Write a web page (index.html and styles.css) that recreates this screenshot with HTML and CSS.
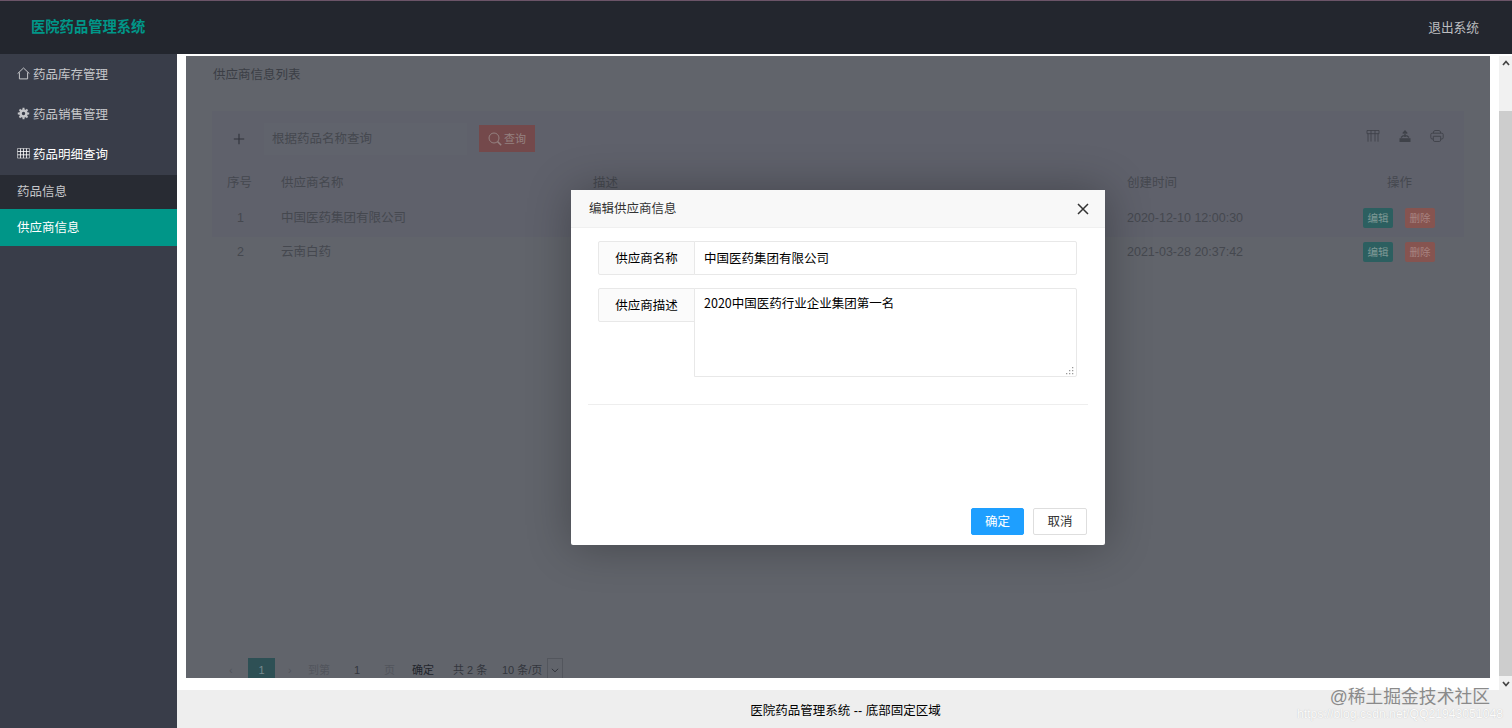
FILE: index.html
```
<!DOCTYPE html>
<html lang="zh-CN">
<head>
  <meta charset="UTF-8">
  <meta name="viewport" content="width=device-width, initial-scale=1.0">
  <title>医院药品管理系统</title>
  <link rel="stylesheet" href="styles.css">
</head>
<body>
  <div class="layout">
    <header class="header">
      <div class="logo">医院药品管理系统</div>
      <a class="logout">退出系统</a>
    </header>

    <nav class="side">
      <a class="nav-item">
        <svg class="nav-icon" viewBox="0 0 13 13"><path d="M.6 6.6 6.5 1l5.9 5.6M2.4 5.4v6.5h8.2V5.4" fill="none" stroke="currentColor" stroke-width="1"/></svg>
        药品库存管理
      </a>
      <a class="nav-item">
        <svg class="nav-icon" viewBox="0 0 13 13"><circle cx="6.5" cy="6.5" r="3" fill="none" stroke="currentColor" stroke-width="2.6"/><path d="M6.5 .8v2M6.5 10.2v2M.8 6.5h2M10.2 6.5h2M2.5 2.5l1.4 1.4M9.1 9.1l1.4 1.4M2.5 10.5l1.4-1.4M9.1 3.9l1.4-1.4" stroke="currentColor" stroke-width="2"/></svg>
        药品销售管理
      </a>
      <a class="nav-item nav-open">
        <svg class="nav-icon" viewBox="0 0 13 13"><path d="M.5 1.5h12v9.6H.5z" fill="none" stroke="currentColor" stroke-width=".5"/><path d="M3.5 1.5v9.6M6.5 1.5v9.6M9.5 1.5v9.6M.5 4.5h12M.5 7.8h12" fill="none" stroke="currentColor" stroke-width=".8"/></svg>
        药品明细查询
      </a>
      <div class="nav-child">
        <a class="child-item">药品信息</a>
        <a class="child-item active">供应商信息</a>
      </div>
    </nav>

    <main class="body">
      <section class="frame">
        <h2 class="frame-title">供应商信息列表</h2>
        <div class="panel">
          <div class="toolbar">
            <span class="add"><svg viewBox="0 0 12 12"><path d="M6 .8v10.4M.8 6h10.4" stroke="currentColor" stroke-width="1.1"/></svg></span>
            <span class="search">根据药品名称查询</span>
            <span class="query">
              <svg viewBox="0 0 14 14"><circle cx="6" cy="6" r="5" fill="none" stroke="currentColor"/><path d="m9.6 9.6 3.6 3.6" stroke="currentColor" stroke-width="1.5"/></svg>
              查询
            </span>
            <div class="tools">
              <svg viewBox="0 0 14 14"><path d="M1 1.5h12v3.2H1zM5 1.5v11M9 1.5v11M2 4.7v8M12 4.7v8" fill="none" stroke="currentColor" stroke-width=".9"/></svg>
              <svg viewBox="0 0 14 14"><path d="M1.5 9.2h11V13h-11z" fill="currentColor"/><path d="M3 8.5 5 6.8h4l2 1.7M7 8V2.5M4.8 4.5 7 2l2.2 2.5" fill="none" stroke="currentColor" stroke-width="1.3"/></svg>
              <svg viewBox="0 0 14 14"><path d="M3.3 4.2Q3.3 1.5 5 1.5h4q1.7 0 1.7 2.7M3.3 10H2.2Q.8 10 .8 8.5v-3Q.8 4.2 2.2 4.2h9.6q1.4 0 1.4 1.3v3q0 1.5-1.4 1.5h-1.1M3.3 7.3h7.4v3.7q0 1.5-1.5 1.5H4.800q-1.500 0-1.500-1.500z" fill="none" stroke="currentColor" stroke-width=".9"/></svg>
            </div>
          </div>
          <div class="row head">
            <span class="no">序号</span><span>供应商名称</span><span>描述</span><span>创建时间</span><span class="ops">操作</span>
          </div>
          <div class="row">
            <span class="no">1</span><span>中国医药集团有限公司</span><span></span><span>2020-12-10 12:00:30</span>
            <span class="ops"><b class="tag edit">编辑</b><b class="tag del">删除</b></span>
          </div>
        </div>
        <div class="row last">
          <span class="no">2</span><span>云南白药</span><span></span><span>2021-03-28 20:37:42</span>
          <span class="ops"><b class="tag edit">编辑</b><b class="tag del">删除</b></span>
        </div>
        <div class="pager">
          <span class="faint prev">‹</span>
          <span class="page">1</span>
          <span class="faint next">›</span>
          <span class="faint goto">到第</span>
          <span class="num">1</span>
          <span class="faint unit">页</span>
          <span class="ok">确定</span>
          <span class="total">共 2 条</span>
          <span class="limit">10 条/页</span>
          <span class="arrow"><svg viewBox="0 0 8 5"><path d="m.8.8 3.200 3L7.200.8" fill="none" stroke="currentColor"/></svg></span>
        </div>
      </section>
      <div class="scrollbar">
        <svg viewBox="0 0 8 6"><path d="m1 5 3-3.500L7 5" fill="none" stroke="currentColor" stroke-width="1.700"/></svg>
        <div class="thumb"></div>
        <svg viewBox="0 0 8 6"><path d="m1 1 3 3.500L7 1" fill="none" stroke="currentColor" stroke-width="1.700"/></svg>
      </div>
    </main>

    <footer class="footer">医院药品管理系统 -- 底部固定区域</footer>
  </div>

  <div class="dialog">
    <div class="dialog-title">
      <span>编辑供应商信息</span>
      <svg class="close" viewBox="0 0 12 12"><path d="m1 1 10 10M11 1 1 11" stroke="currentColor" stroke-width="1.500"/></svg>
    </div>
    <form class="dialog-form">
      <div class="field">
        <label class="label">供应商名称</label>
        <div class="control">中国医药集团有限公司</div>
      </div>
      <div class="field">
        <label class="label">供应商描述</label>
        <div class="control area">2020中国医药行业企业集团第一名
          <svg class="grip" viewBox="0 0 8 8"><path d="M6 0h1.300v1.300H6zM3 3h1.300v1.300H3zM6 3h1.300v1.300H6zM0 6h1.300v1.300H0zM3 6h1.300v1.300H3zM6 6h1.300v1.300H6z" fill="#999"/></svg>
        </div>
      </div>
    </form>
    <hr class="line">
    <div class="dialog-btns">
      <a class="btn primary">确定</a>
      <a class="btn">取消</a>
    </div>
  </div>

  <div class="mark">@稀土掘金技术社区</div>
  <div class="mark-url">https://blog.csdn.net/QQ21943051048</div>
</body>
</html>
```
FILE: styles.css
```
* {
  box-sizing: border-box;
}
body {
  margin: 0;
  height: 728px;
  overflow: hidden;
  position: relative;
  font-family: "Liberation Sans", "Noto Sans CJK SC", sans-serif;
  font-size: 12.5px;
  line-height: 18px;
  color: #000;
  background: #fff;
  white-space: nowrap;
}
svg {
  display: block;
  flex: none;
}
.layout {
  display: grid;
  grid-template: 54px 636px 38px / 177px 1fr;
  height: 728px;
}
.header {
  grid-column: 1 / 3;
  display: flex;
  justify-content: space-between;
  align-items: center;
  padding: 0 33px 1px 31px;
  background: #23262e;
  border-top: 1px solid #6b5468;
}
.logo {
  color: #009688;
  font-size: 14.3px;
  font-weight: bold;
}
.logout {
  padding-top: 1px;
  color: #bdbec0;
  font-size: 12.7px;
}

/* side menu */
.side {
  grid-row: 2 / 4;
  background: #393d49;
  color: #c6c7ca;
}
.nav-item {
  display: flex;
  align-items: center;
  gap: 3px;
  height: 40px;
  padding-top: 1px;
  padding-left: 17px;
}
.nav-icon {
  width: 13px;
  height: 13px;
  margin-top: -2px;
}
.nav-open {
  color: #fff;
}
.nav-child {
  margin-top: 1px;
  background: #282b33;
}
.child-item {
  display: block;
  height: 34px;
  padding-left: 17px;
  line-height: 35px;
}
.active {
  height: 37px;
  line-height: 38px;
  color: #fff;
  background: #009688;
}

/* list page, dimmed by the dialog shade */
.body {
  display: flex;
  justify-content: space-between;
  padding: 2px 0 0 9px;
}
.frame {
  width: 1304px;
  height: 622px;
  display: flex;
  flex-direction: column;
  overflow: hidden;
  background: #61646b;
  color: #45484f;
}
.frame-title {
  margin: 10px 0 0 27px;
  font-size: 12.5px;
  line-height: 18px;
  font-weight: normal;
  color: #3b3e45;
}
.panel {
  margin: 27px 26px 0;
  height: 126px;
  background: #5f616b;
}
.toolbar {
  display: flex;
  align-items: center;
  height: 55px;
  padding-left: 13px;
}
.add {
  width: 28px;
  height: 28px;
  padding: 8px;
  color: #30333b;
}
.add svg {
  width: 12px;
  height: 12px;
}
.search {
  width: 203px;
  height: 32px;
  margin-left: 11px;
  padding-left: 8px;
  line-height: 33px;
  background: #60636c;
}
.query {
  display: flex;
  align-items: center;
  gap: 2px;
  width: 56px;
  height: 27px;
  margin-left: 12px;
  padding-left: 9px;
  font-size: 11px;
  color: #948180;
  background: #74494b;
}
.query svg {
  width: 14px;
  height: 14px;
}
.tools {
  display: flex;
  gap: 18px;
  margin: -5px 20px 0 auto;
  color: #3f4249;
}
.tools svg {
  width: 14px;
  height: 14px;
}
.row {
  display: grid;
  grid-template-columns: 56px 312px 534px 236px 1fr;
  align-items: center;
  height: 35px;
  padding-left: 13px;
}
.head {
  height: 34px;
}
.no {
  padding-left: 12px;
}
.head .no {
  padding-left: 2px;
}
.last {
  margin: 0 26px;
  height: 30px;
}
.ops {
  display: flex;
  gap: 12px;
}
.head .ops {
  padding-left: 24px;
}
.tag {
  width: 30px;
  height: 20px;
  border-radius: 2px;
  font-size: 10.5px;
  font-weight: normal;
  line-height: 20px;
  text-align: center;
}
.edit {
  background: #2c5f60;
  color: #7e9895;
}
.del {
  background: #865450;
  color: #a88380;
}
.pager {
  display: flex;
  align-items: flex-start;
  height: 20px;
  margin: auto 0 0 43px;
  font-size: 11px;
  line-height: 24px;
  color: #33363d;
}
.faint {
  color: #51545c;
}
.prev {
  width: 19px;
}
.page {
  width: 27px;
  height: 20px;
  text-align: center;
  background: #2e5055;
  color: #778a8f;
}
.next {
  width: 33px;
  padding-left: 13px;
}
.goto {
  width: 46px;
}
.num {
  width: 30px;
}
.unit {
  width: 28px;
}
.ok {
  width: 41px;
  color: #22252b;
}
.total {
  width: 49px;
}
.limit {
  width: 45px;
}
.arrow {
  width: 16px;
  height: 20px;
  padding: 9px 3px 0;
  border: 1px solid #53565d;
  border-bottom: 0;
}
.arrow svg {
  width: 8px;
  height: 5px;
}
.scrollbar {
  display: flex;
  flex-direction: column;
  align-items: center;
  justify-content: space-between;
  width: 13px;
  padding: 4px 0 3px;
  background: #f1f1f1;
  color: #444;
}
.scrollbar svg {
  width: 8px;
  height: 6px;
}
.thumb {
  width: 13px;
  height: 565px;
  margin-top: 40px;
  background: #cdcdcd;
}
.footer {
  padding-top: 12px;
  padding-left: 2px;
  text-align: center;
  background: #eee;
}

/* edit dialog */
.dialog {
  position: absolute;
  left: 571px;
  top: 190px;
  width: 534px;
  height: 355px;
  display: flex;
  flex-direction: column;
  font-family: "Noto Sans CJK SC", sans-serif;
  background: #fff;
  border-radius: 2px;
  box-shadow: 1px 1px 45px rgba(0, 0, 0, 0.3);
}
.dialog-title {
  display: flex;
  align-items: center;
  justify-content: space-between;
  height: 38px;
  padding: 0 16px 0 18px;
  color: #333;
  background: #f8f8f8;
  border-bottom: 1px solid #f0f0f0;
}
.dialog-title span {
  margin-top: -1px;
}
.close {
  width: 12px;
  height: 12px;
  margin-top: 1px;
}
.dialog-form {
  padding: 13px 28px 0 27px;
}
.field {
  display: flex;
  align-items: flex-start;
  margin-bottom: 13px;
}
.label {
  width: 97px;
  height: 34px;
  line-height: 32px;
  text-align: center;
  background: #fbfbfb;
  border: 1px solid #e8e8e8;
  border-radius: 2px 0 0 2px;
}
.control {
  flex: 1;
  height: 34px;
  margin-left: -1px;
  padding-left: 9px;
  line-height: 32px;
  background: #fff;
  border: 1px solid #e8e8e8;
  border-radius: 0 2px 2px 0;
}
.area {
  position: relative;
  height: 89px;
  line-height: 28px;
}
.grip {
  position: absolute;
  right: 2px;
  bottom: 1px;
  width: 8px;
  height: 8px;
}
.line {
  width: 500px;
  height: 1px;
  margin: 14px 17px 0;
  border: 0;
  background: #eee;
}
.dialog-btns {
  display: flex;
  justify-content: flex-end;
  gap: 9px;
  margin: auto 18px 10px 0;
}
.btn {
  width: 54px;
  height: 27px;
  line-height: 24px;
  text-align: center;
  color: #333;
  border: 1px solid #dedede;
  border-radius: 2px;
}
.primary {
  width: 53px;
  color: #fff;
  background: #1e9fff;
  border-color: #1e9fff;
}

/* watermark */
.mark {
  position: absolute;
  right: 22px;
  top: 685px;
  font-size: 17.800px;
  line-height: 24px;
  color: #8a8a8a;
}
.mark-url {
  position: absolute;
  right: 9px;
  top: 705px;
  font-size: 12.200px;
  color: #fbfbfb;
  text-shadow: 0 0 1px #bbb;
}
```
